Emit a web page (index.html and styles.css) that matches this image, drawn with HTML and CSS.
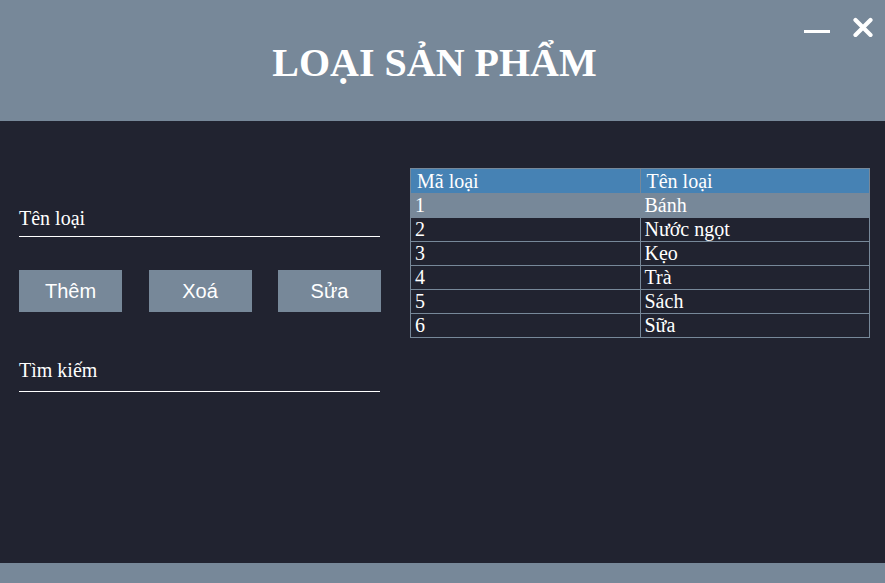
FILE: index.html
```html
<!DOCTYPE html>
<html lang="vi">
<head>
<meta charset="utf-8">
<title>Loại sản phẩm</title>
<link rel="stylesheet" href="styles.css">
</head>
<body>
<div class="app">
  <header class="header">
    <h1 class="title">LOẠI SẢN PHẨM</h1>
    <div class="controls">
      <svg class="ctl" width="26" height="20" viewBox="0 0 26 20"><rect x="0" y="13" width="26" height="3" fill="#fff"/></svg>
      <svg class="ctl" width="22" height="20" viewBox="0 0 22 20"><path d="M3.5 3 L18.5 18 M18.5 3 L3.5 18" stroke="#fff" stroke-width="4.2" stroke-linecap="round"/></svg>
    </div>
  </header>
  <main class="main">
    <section class="left">
      <div class="field field-name"><div class="label">Tên loại</div></div>
      <div class="buttons">
        <button class="btn">Thêm</button>
        <button class="btn">Xoá</button>
        <button class="btn">Sửa</button>
      </div>
      <div class="field field-search"><div class="label">Tìm kiếm</div></div>
    </section>
    <section class="right">
      <table class="grid">
        <thead>
          <tr><th>Mã loại</th><th>Tên loại</th></tr>
        </thead>
        <tbody>
          <tr class="selected"><td>1</td><td>Bánh</td></tr>
          <tr><td>2</td><td>Nước ngọt</td></tr>
          <tr><td>3</td><td>Kẹo</td></tr>
          <tr><td>4</td><td>Trà</td></tr>
          <tr><td>5</td><td>Sách</td></tr>
          <tr><td>6</td><td>Sữa</td></tr>
        </tbody>
      </table>
    </section>
  </main>
  <footer class="footer"></footer>
</div>
</body>
</html>
```
FILE: styles.css
```css
html, body {
  margin: 0;
  padding: 0;
}
body {
  width: 885px;
  height: 583px;
  overflow: hidden;
  background: #212330;
  font-family: "Liberation Serif", "Times New Roman", serif;
  color: #fff;
}
.app {
  display: flex;
  flex-direction: column;
  height: 583px;
}
.header {
  position: relative;
  height: 121px;
  background: #778899;
  flex: none;
}
.title {
  margin: 0;
  padding: 40px 16px 0 0;
  text-align: center;
  font-family: "Liberation Serif", "Times New Roman", serif;
  font-weight: bold;
  font-size: 40px;
  line-height: 46px;
  color: #fff;
}
.controls {
  position: absolute;
  top: 17px;
  right: 11px;
  display: flex;
  gap: 22px;
  align-items: flex-start;
}
.ctl {
  display: block;
}
.main {
  flex: 1;
  display: flex;
  padding-left: 19px;
  gap: 29px;
}
.left {
  width: 362px;
  padding-top: 86px;
}
.field {
  width: 361px;
  border-bottom: 1px solid #fff;
}
.field-name {
  padding-bottom: 6px;
}
.field-search {
  margin-top: 47px;
  padding-bottom: 9px;
}
.label {
  font-size: 20px;
  line-height: 23px;
}
.buttons {
  margin-top: 33px;
  display: flex;
  justify-content: space-between;
}
.btn {
  width: 103px;
  height: 42px;
  border: none;
  background: #778899;
  color: #fff;
  font-family: "Liberation Sans", Arial, sans-serif;
  font-size: 20px;
  padding: 0;
}
.right {
  padding-top: 47px;
}
.grid {
  width: 460px;
  border-collapse: collapse;
  table-layout: fixed;
  font-size: 20px;
}
.grid th, .grid td {
  border: 1px solid #778899;
  text-align: left;
  font-weight: normal;
  padding: 0 0 0 4px;
  height: 23px;
  line-height: 23px;
  white-space: nowrap;
}
.grid th {
  background: #4682b4;
  height: 24px;
  padding-left: 6px;
}
.grid th + th {
  border-left-color: #8aa4bf;
}
.grid tr.selected td {
  background: #778899;
}
.footer {
  height: 20px;
  background: #778899;
  flex: none;
}
```
